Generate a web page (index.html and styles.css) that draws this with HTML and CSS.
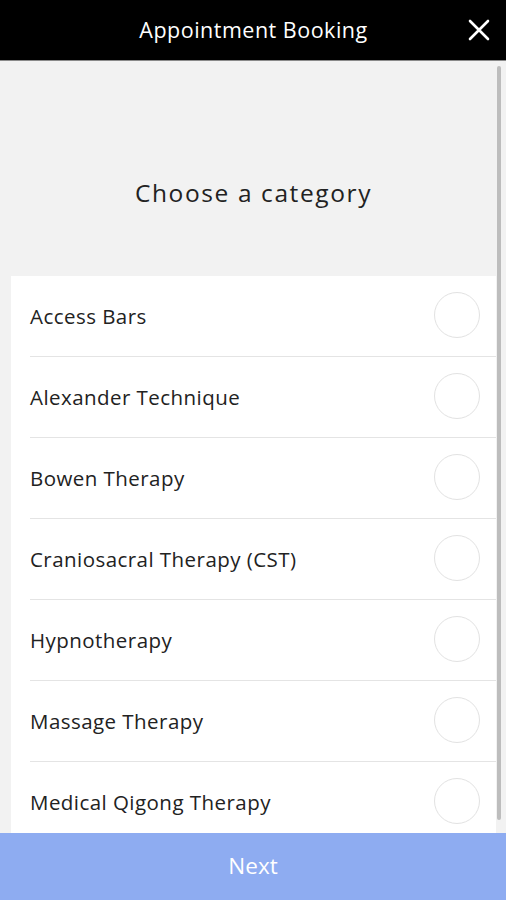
FILE: index.html
```html
<!DOCTYPE html>
<html>
<head>
<meta charset="utf-8">
<link rel="stylesheet" href="styles.css">
</head>
<body>
<div class="app">
  <header class="topbar">
    <h1 class="title">Appointment Booking</h1>
    <button class="close" aria-label="Close">
      <svg width="22" height="22" viewBox="0 0 22 22"><path d="M2 2 L20 20 M20 2 L2 20" stroke="#fff" stroke-width="2.6" stroke-linecap="round"/></svg>
    </button>
  </header>
  <main class="content">
    <div class="intro">
      <h2 class="heading">Choose a category</h2>
    </div>
    <ul class="list">
      <li class="row"><span class="label">Access Bars</span><span class="radio"></span></li>
      <li class="row"><span class="label">Alexander Technique</span><span class="radio"></span></li>
      <li class="row"><span class="label">Bowen Therapy</span><span class="radio"></span></li>
      <li class="row"><span class="label">Craniosacral Therapy (CST)</span><span class="radio"></span></li>
      <li class="row"><span class="label">Hypnotherapy</span><span class="radio"></span></li>
      <li class="row"><span class="label">Massage Therapy</span><span class="radio"></span></li>
      <li class="row"><span class="label">Medical Qigong Therapy</span><span class="radio"></span></li>
      <li class="row"><span class="label">Reflexology</span><span class="radio"></span></li>
    </ul>
    <div class="scrollbar"></div>
  </main>
  <button class="next">Next</button>
</div>
</body>
</html>
```
FILE: styles.css
```css
* { box-sizing: border-box; }
html, body { margin: 0; padding: 0; height: 100%; overflow: hidden; }
body { font-family: "Open Sans", "Liberation Sans", sans-serif; background: #f2f2f2; color: #222; }
.app { position: relative; height: 900px; display: flex; flex-direction: column; }
.topbar {
  height: 61px; background: #000; border-bottom: 1px solid #8a8a8a;
  display: flex; align-items: center; justify-content: center; position: relative; flex: none;
}
.title { margin: 0; color: #fff; font-size: 21.5px; font-weight: 500; letter-spacing: 0.5px; padding-left: 1px; padding-bottom: 1px; font-family: "Open Sans", sans-serif; }
.close { position: absolute; right: 16px; top: 19px; background: none; border: 0; padding: 0; width: 22px; height: 22px; display: flex; }
.content { position: relative; flex: 1; overflow: hidden; }
.intro { height: 215px; display: flex; align-items: center; justify-content: center; padding-top: 47px; }
.heading { margin: 0; font-size: 24.5px; font-weight: 400; letter-spacing: 1.6px; color: #222; padding-left: 1px; }
.list { list-style: none; margin: 0 10px 0 11px; padding: 0 0 0 19px; background: #fff; }
.row {
  height: 81px; border-bottom: 1px solid #e4e4e4; display: flex; align-items: center; justify-content: space-between;
  padding-right: 16px; padding-bottom: 1px;
}
.label { font-size: 20.5px; color: #222; letter-spacing: 0.45px; }
.radio { width: 46px; height: 46px; border: 1px solid #e2e2e2; border-radius: 50%; flex: none; margin-top: -2px; }
.scrollbar { position: absolute; right: 5px; top: 5px; width: 4px; height: 754px; background: #bdbdbd; border-radius: 2px; }
.next {
  position: absolute; left: 0; right: 0; bottom: 0; height: 67px; border: 0; background: #8eacf1;
  color: #fff; font-family: "Open Sans", sans-serif; font-size: 22.5px; padding: 0; padding-bottom: 2px;
}
```
